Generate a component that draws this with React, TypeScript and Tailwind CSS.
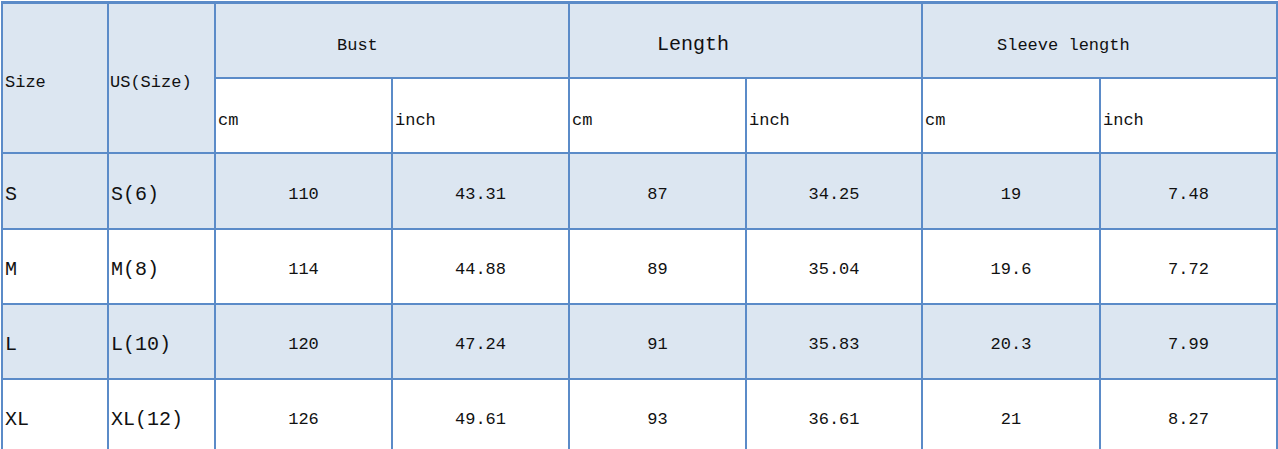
import React from "react";

const rows = [
  ["S", "S(6)", "110", "43.31", "87", "34.25", "19", "7.48"],
  ["M", "M(8)", "114", "44.88", "89", "35.04", "19.6", "7.72"],
  ["L", "L(10)", "120", "47.24", "91", "35.83", "20.3", "7.99"],
  ["XL", "XL(12)", "126", "49.61", "93", "36.61", "21", "8.27"],
];

const cell = "border-2 border-[#5b8bc8] p-0 align-middle";

export default function App() {
  return (
    <div className="w-[1278px] h-[449px] overflow-hidden bg-white text-[#111] pt-[1px] pl-[1px]" style={{ fontFamily: '"Liberation Mono", "DejaVu Sans Mono", monospace' }}>
      <table className="table-fixed border-collapse w-[1275px]">
        <colgroup>
          <col className="w-[106px]" />
          <col className="w-[107px]" />
          <col className="w-[177px]" />
          <col className="w-[177px]" />
          <col className="w-[177px]" />
          <col className="w-[176px]" />
          <col className="w-[178px]" />
          <col className="w-[177px]" />
        </colgroup>
        <thead>
          <tr className="h-[75px] bg-[#dce6f1]">
            <th rowSpan={2} className={`${cell} border-t-[3px] text-left font-normal text-[17px] pl-[2px] pt-[10px]`}>Size</th>
            <th rowSpan={2} className={`${cell} border-t-[3px] text-left font-normal text-[17px] pl-[1px] pt-[10px]`}>US(Size)</th>
            <th colSpan={2} className={`${cell} border-t-[3px] text-left font-normal text-[17px] pl-[121px] pt-[10px]`}>Bust</th>
            <th colSpan={2} className={`${cell} border-t-[3px] text-left font-normal text-[20px] pl-[87px] pt-[10px]`}>Length</th>
            <th colSpan={2} className={`${cell} border-t-[3px] text-left font-normal text-[17px] pl-[74px] pt-[10px]`}>Sleeve length</th>
          </tr>
          <tr className="h-[75px] bg-white">
            {["cm", "inch", "cm", "inch", "cm", "inch"].map((t, i) => (
              <th key={i} className={`${cell} text-left font-normal text-[17px] pl-[2px] pt-[11px]`}>{t}</th>
            ))}
          </tr>
        </thead>
        <tbody>
          {rows.map((r, ri) => (
            <tr key={ri} className={`${ri === 0 ? "h-[76px]" : "h-[75px]"} ${ri % 2 === 0 ? "bg-[#dce6f1]" : "bg-white"}`}>
              {r.map((v, ci) => (
                <td
                  key={ci}
                  className={`${cell} pt-[8px] ${ci < 2 ? "text-left text-[20px] pl-[2px]" : "text-center text-[17px]"}`}
                >
                  {v}
                </td>
              ))}
            </tr>
          ))}
        </tbody>
      </table>
    </div>
  );
}
